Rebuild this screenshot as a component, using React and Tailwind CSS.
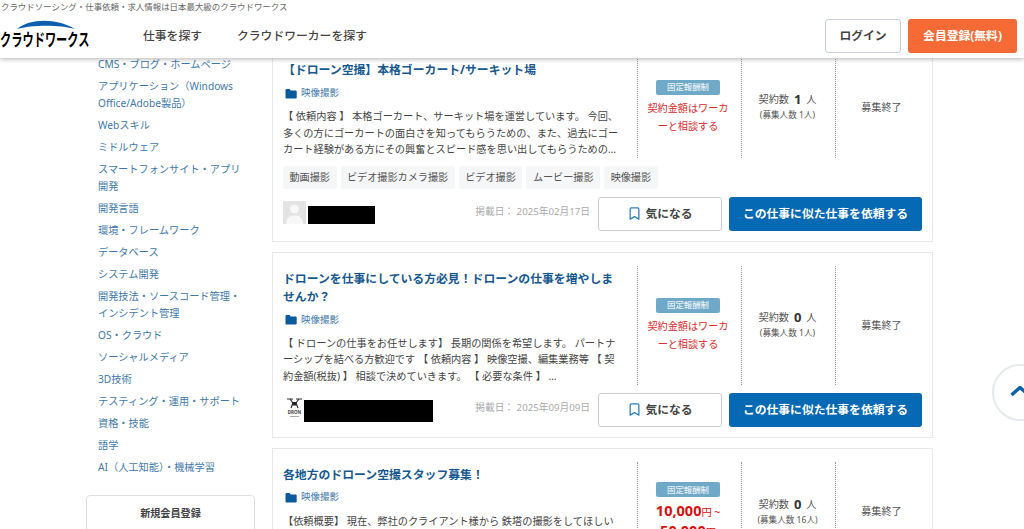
import React from "react";
import { Bookmark } from "lucide-react";

const FONT = { fontFamily: '"Noto Sans", "Noto Sans CJK JP", sans-serif' };

const categories = [
  "CMS・ブログ・ホームページ",
  "アプリケーション（Windows Office/Adobe製品）",
  "Webスキル",
  "ミドルウェア",
  "スマートフォンサイト・アプリ開発",
  "開発言語",
  "環境・フレームワーク",
  "データベース",
  "システム開発",
  "開発技法・ソースコード管理・インシデント管理",
  "OS・クラウド",
  "ソーシャルメディア",
  "3D技術",
  "テスティング・運用・サポート",
  "資格・技能",
  "語学",
  "AI（人工知能）・機械学習",
];

const jobs = [
  {
    title: "【ドローン空撮】本格ゴーカート/サーキット場",
    desc: "【 依頼内容 】 本格ゴーカート、サーキット場を運営しています。 今回、多くの方にゴーカートの面白さを知ってもらうための、また、過去にゴーカート経験がある方にその興奮とスピード感を思い出してもらうための…",
    tags: ["動画撮影", "ビデオ撮影カメラ撮影", "ビデオ撮影", "ムービー撮影", "映像撮影"],
    contract: "1",
    recruit: "1",
    date: "2025年02月17日",
    avatar: "person",
    maskW: "w-[67px]",
    maskH: "h-[18px]",
  },
  {
    title: "ドローンを仕事にしている方必見！ドローンの仕事を増やしませんか？",
    desc: "【 ドローンの仕事をお任せします】 長期の関係を希望します。 パートナーシップを結べる方歓迎です 【 依頼内容 】 映像空撮、編集業務等 【 契約金額(税抜) 】 相談で決めていきます。 【 必要な条件 】 …",
    tags: [],
    contract: "0",
    recruit: "1",
    date: "2025年09月09日",
    avatar: "drone",
    maskW: "w-[129px]",
    maskH: "h-[22px]",
  },
  {
    title: "各地方のドローン空撮スタッフ募集！",
    desc: "【依頼概要】 現在、弊社のクライアント様から 鉄塔の撮影をしてほしいというご依頼をいただいております。各地方で撮影が可能なスタッフの方を募集しています。",
    tags: [],
    contract: "0",
    recruit: "16",
    price: true,
    date: "",
  },
];

function FolderIcon() {
  return (
    <svg width="12" height="11" viewBox="0 0 12 11" className="shrink-0">
      <path d="M0.5 2a1 1 0 0 1 1-1h3l1.2 1.4h5a1 1 0 0 1 1 1V9.500a1 1 0 0 1-1 1h-9.200a1 1 0 0 1-1-1z" fill="#0b5a9c" />
    </svg>
  );
}

function PersonAvatar() {
  return (
    <svg width="23" height="23" viewBox="0 0 23 23" className="shrink-0">
      <rect width="23" height="23" fill="#e3e3e3" />
      <circle cx="11.500" cy="8" r="4.500" fill="#f7f7f7" />
      <path d="M3 23c0-6 3.500-8.500 8.500-8.500S20 17 20 23z" fill="#f7f7f7" />
    </svg>
  );
}

function DroneAvatar() {
  return (
    <svg width="19" height="23" viewBox="0 0 19 23" className="ml-[2px] mr-[-2px] shrink-0">
      <path d="M2 2h6M11 2h6M5 2l3 4h3l3-4M8 6l-2 5M11 6l2 5" stroke="#333" strokeWidth="1.200" fill="none" />
      <rect x="7.500" y="5" width="4" height="3.500" fill="#222" />
      <text x="9.500" y="17" textAnchor="middle" fontSize="4.500" fontWeight="700" fill="#444">DRON</text>
      <rect x="5" y="19" width="9" height="1" fill="#aaa" />
    </svg>
  );
}

function JobCard({ job }) {
  return (
    <div className="border border-[#e8e8e8] bg-white pt-[13px] pr-[10px] pb-[10px] pl-[10px]">
      <div className="flex">
        <div className="w-[354px] shrink-0 pt-[3px] pr-[17px]">
          <h3 className="text-[11.850px] leading-[18px] font-bold text-[#17598f]">{job.title}</h3>
          <div className="mt-[8px] flex h-[14px] items-center gap-[4px] pl-[2px] text-[9.500px] text-[#3f79aa]">
            <FolderIcon />
            <span>映像撮影</span>
          </div>
          <p className="mt-[8px] text-[10.200px] leading-[16.600px] text-[#444]">{job.desc}</p>
        </div>

        <div className="flex w-[104px] shrink-0 flex-col items-center justify-center border-l border-dotted border-[#999] pr-[3px]">
          <span className="flex h-[15px] w-[64px] items-center justify-center rounded-[2px] bg-[#70a9c8] text-[8.400px] font-medium text-[#e8f2f7]">
            固定報酬制
          </span>
          {job.price ? (
            <div className="mt-[4px] text-center leading-[18px] whitespace-nowrap text-[#d80f0f]">
              <div className="text-[14.500px] font-bold">
                10,000<span className="text-[10.200px] font-normal">円 ~</span>
              </div>
              <div className="text-[14.500px] font-bold">
                50,000<span className="text-[10.200px] font-normal">円</span>
              </div>
            </div>
          ) : (
            <div className="mt-[4px] w-[84px] text-center text-[10.150px] leading-[18px] text-[#dc2a2a]">
              契約金額はワーカーと相談する
            </div>
          )}
        </div>

        <div className="flex w-[94px] shrink-0 flex-col items-center justify-center border-l border-dotted border-[#999] pr-[2px] text-[#555]">
          <div className="flex h-[15px] items-center text-[10.150px]">
            契約数<span className="mx-[5px] text-[13px] font-bold text-[#333]">{job.contract}</span>人
          </div>
          <div className="mt-[1px] text-[8.600px] leading-[14px]">(募集人数 {job.recruit}人)</div>
        </div>

        <div className="flex flex-1 items-center justify-center border-l border-dotted border-[#999] pl-[5px] text-[10.150px] text-[#555]">
          募集終了
        </div>
      </div>

      {job.tags.length > 0 && (
        <div className="mt-[8px] mb-[2px] flex gap-[4px]">
          {job.tags.map((t) => (
            <span key={t} className="flex h-[23px] items-center rounded-[2px] bg-[#f5f6f7] px-[6.500px] text-[10.150px] text-[#555]">
              {t}
            </span>
          ))}
        </div>
      )}

      {job.date && (
        <div className="mt-[8px] flex h-[34px] items-center">
          <div className="flex items-center gap-[2px] pb-[2px]">
            {job.avatar === "person" ? <PersonAvatar /> : <DroneAvatar />}
            <div className={`mt-[4px] bg-black ${job.maskW} ${job.maskH}`} />
          </div>
          <span className="mr-[8px] ml-auto pb-[3px] text-[9.700px] text-[#aaa]">掲載日： {job.date}</span>
          <button className="flex h-[34px] w-[124px] items-center justify-center gap-[3px] rounded-[3px] border border-[#c9ced4] bg-white text-[11.800px] font-bold text-[#444]">
            <Bookmark size={15} strokeWidth={2} color="#2a7fc0" />
            気になる
          </button>
          <button className="ml-[7px] flex h-[34px] w-[193px] items-center justify-center rounded-[3px] bg-[#0569b4] text-[11.800px] font-bold text-white">
            この仕事に似た仕事を依頼する
          </button>
        </div>
      )}
    </div>
  );
}

export default function App() {
  return (
    <div className="relative flex h-[529px] w-[1024px] flex-col overflow-hidden bg-white" style={FONT}>
      <header className="relative z-10 h-[58px] shrink-0 bg-white shadow-[0_1px_5px_rgba(0,0,0,0.3)]">
        <div className="h-[14px] pl-[1px] text-[8.450px] leading-[14px] text-[#666]">
          クラウドソーシング・仕事依頼・求人情報は日本最大級のクラウドワークス
        </div>
        <div className="flex h-[44px] items-center pr-[7px]">
          <div className="relative h-[44px] w-[143px] shrink-0">
            <svg width="70" height="12" viewBox="0 0 70 12" className="absolute top-[6px] left-[12px]">
              <path d="M5 9C18 -2 45 -2 63 9C48 4.500 20 4.500 5 9z" fill="#0b5fae" />
            </svg>
            <span className="absolute top-[14px] left-0 origin-left scale-x-[0.66] text-[17px] leading-[24px] font-bold whitespace-nowrap text-black">
              クラウドワークス
            </span>
          </div>
          <nav className="flex gap-[35px] text-[11.800px] font-medium text-[#444]">
            <span>仕事を探す</span>
            <span>クラウドワーカーを探す</span>
          </nav>
          <button className="ml-auto flex h-[34px] w-[76px] items-center justify-center rounded-[3px] border border-[#c9ced4] bg-white text-[11.800px] font-bold text-[#444]">
            ログイン
          </button>
          <button className="ml-[7px] flex h-[34px] w-[109px] items-center justify-center rounded-[3px] bg-[#f56a35] text-[11.800px] font-bold text-white">
            会員登録(無料)
          </button>
        </div>
      </header>

      <main className="-mt-[15px] flex">
        <aside className="w-[255px] shrink-0 pt-[13px] pl-[86px]">
          <ul className="flex flex-col gap-[5px] px-[12px] text-[10.200px] leading-[17px] text-[#3f79aa]">
            {categories.map((c) => (
              <li key={c}>{c}</li>
            ))}
          </ul>
          <div className="mt-[19px] h-[80px] rounded-[4px] border border-[#e0e0e0] pt-[10px] text-center text-[10.150px] font-bold text-[#444]">
            新規会員登録
          </div>
        </aside>
        <section className="ml-[17px] flex w-[661px] shrink-0 flex-col gap-[10px]">
          {jobs.map((j) => (
            <JobCard key={j.title} job={j} />
          ))}
        </section>
      </main>

      <div className="absolute top-[364px] left-[992px] h-[57px] w-[57px] rounded-full border-2 border-[#e6e9ec] bg-white">
        <svg width="22" height="16" viewBox="0 0 22 16" className="absolute top-[17px] left-[15px]">
          <path d="M2.500 12L11 4.500L19.500 12" stroke="#0b62a8" strokeWidth="3.500" fill="none" strokeLinejoin="round" />
        </svg>
      </div>
    </div>
  );
}
